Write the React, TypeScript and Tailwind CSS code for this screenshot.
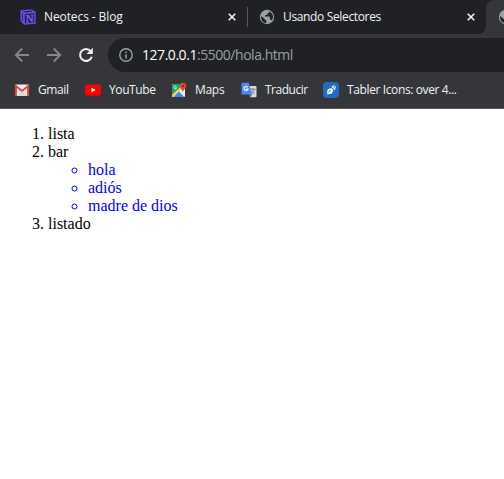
import React from 'react';

const ui = "font-['Open_Sans','Noto_Sans',sans-serif]";

function NotionIcon() {
  return (
    <svg width="16" height="16" viewBox="0 0 16 16" className="shrink-0">
      <path d="M.5 1.2 11.8.4 15.6 2.8v12L4.2 15.8.5 12z" fill="#6a4df5" />
      <path d="M2.6 2.4 11.5 1.8 13 2.7 4.2 3.4z" fill="#252238" />
      <path d="M1.9 3.6 3.1 4.8V12.6L1.9 11.3z" fill="#352b68" />
      <path d="M4.8 5 14.1 4.3v9.2l-9.3.8z" fill="#252238" />
      <path d="M6 6h2.7l2.8 4.6V6.7l-1-.2v-.7h3.1v.7l-.8.2v6.3h-1.4L7.9 8v4.4l1.1.3v.7H6v-.7l.7-.3V6.9L6 6.7z" fill="#7558ff" />
    </svg>
  );
}

function Globe() {
  return (
    <svg width="16" height="16" viewBox="0 0 16 16" className="shrink-0">
      <circle cx="8" cy="8" r="7.2" fill="#9aa0a6" />
      <path d="M2.1 7 5.7 10.1c.3.9.8 1.3 1.5 1.4v2.6C4 13.8 1.8 11.2 2.1 7zM9.3 2.2c2.6.6 4.6 2.8 4.8 5.5-.1 1.4-.6 2.8-1.5 3.8-.3-.7-.8-1-1.7-1V8.5c0-.6-.3-.9-.9-.9H6.2V6.1h1.5c.5 0 .8-.3.8-.8V3.9h1c.9 0 1.2-.6-.2-1.7z" fill="#202124" />
    </svg>
  );
}

function Close() {
  return (
    <svg width="8" height="8" viewBox="0 0 8 8" className="shrink-0">
      <path d="m.7.7 6.6 6.6M7.3.7.7 7.3" stroke="#f1f3f4" strokeWidth="1.6" />
    </svg>
  );
}

function Arrow({ flip = false }: { flip?: boolean }) {
  return (
    <svg width="16" height="16" viewBox="0 0 16 16" className={flip ? 'shrink-0 -scale-x-100' : 'shrink-0'}>
      <path d="M15 8H2M8.3 1.5 1.8 8l6.5 6.5" fill="none" stroke="#85878a" strokeWidth="1.8" />
    </svg>
  );
}

function Reload() {
  return (
    <svg width="16" height="16" viewBox="0 0 16 16" className="shrink-0">
      <path d="M12.7 4.1A6 6 0 1 0 13.8 9.8" fill="none" stroke="#f1f3f4" strokeWidth="2" />
      <path d="M14.8.8v6.3H8.5z" fill="#f1f3f4" />
    </svg>
  );
}

function Info() {
  return (
    <svg width="14" height="14" viewBox="0 0 14 14" className="shrink-0">
      <circle cx="7" cy="7" r="6.2" fill="none" stroke="#9aa0a6" strokeWidth="1.4" />
      <path d="M7 6.2v4.2M7 3.5v1.5" stroke="#9aa0a6" strokeWidth="1.5" />
    </svg>
  );
}

function Gmail() {
  return (
    <svg width="16" height="16" viewBox="0 0 16 16" className="shrink-0">
      <rect x="1" y="2.5" width="14" height="11.5" rx="1" fill="#eceded" />
      <path d="m3 14 5-4.8 5 4.8z" fill="#d5d5d5" />
      <path d="M1.9 14V4L8 9l6.1-5v10" fill="none" stroke="#dc493d" strokeWidth="2" />
    </svg>
  );
}

function YouTube() {
  return (
    <svg width="16" height="16" viewBox="0 0 16 16" className="shrink-0">
      <rect y="2.5" width="16" height="11.3" rx="2.8" fill="#f00" />
      <path d="m6.4 5.7 4.3 2.4-4.3 2.4z" fill="#fff" />
    </svg>
  );
}

function Maps() {
  return (
    <svg width="16" height="16" viewBox="0 0 16 16" className="shrink-0">
      <rect x="1" y="2" width="13" height="13" rx="1" fill="#edeff0" />
      <path d="M1 3a1 1 0 0 1 1-1h8.5v3.3L1 14z" fill="#21a464" />
      <path d="m1 12.8 9-8.2 1.2 1.2-9 9.2H2a1 1 0 0 1-1-1z" fill="#fbcf3b" />
      <path d="m2.7 15 5.2-5.4 5.3 5.4z" fill="#4285f4" />
      <path d="M5.4 4.4A1.4 1.4 0 1 0 5.6 6H4.2" fill="none" stroke="#fff" strokeWidth=".8" />
      <path d="M12 .8a3.2 3.2 0 0 0-3.2 3.3c0 2.5 2.7 3.5 3.1 6.3.5-2.8 3.3-3.8 3.3-6.3A3.2 3.2 0 0 0 12 .8z" fill="#ea4335" />
      <circle cx="12" cy="4" r="1.2" fill="#832d28" />
    </svg>
  );
}

function Translate() {
  return (
    <svg width="16" height="16" viewBox="0 0 16 16" className="shrink-0">
      <path d="M7 4h7.5a1 1 0 0 1 1 1v9.2a1 1 0 0 1-1 1H9z" fill="#dadcdf" />
      <path d="M9.2 7.2h5.3M11.8 6v1.2m1.5 0c-.4 2.2-1.5 3.4-2.8 4.5M10.6 8.6c.5 1.5 1.5 2.6 3 3.4" fill="none" stroke="#6b7178" strokeWidth=".9" />
      <path d="M1.5.8h6.3l3.5 11.8H1.5a1 1 0 0 1-1-1V1.8a1 1 0 0 1 1-1z" fill="#4a8af5" />
      <path d="M8.2 12.6h3.1l-2.1 2.7z" fill="#3464c8" />
      <path d="M6.7 5.4A2 2 0 1 0 7 7H5.2" fill="none" stroke="#fff" strokeWidth="1.1" />
    </svg>
  );
}

function Tabler() {
  return (
    <svg width="16" height="16" viewBox="0 0 16 16" className="shrink-0">
      <rect width="16" height="16" rx="4" fill="#206bc4" />
      <path d="M3.6 12.4 4.8 7.3 8.4 5.9l2 2-1.5 3.5z" fill="#fff" />
      <path d="m8.8 4.1 3.5 3.4" stroke="#fff" strokeWidth="1.3" />
      <path d="M4 12l2.8-2.8" stroke="#206bc4" strokeWidth=".7" />
      <circle cx="7.1" cy="9" r=".8" fill="#206bc4" />
      <path d="M10.1 3.6c1.4 0 2.4 1 2.4 2.3" fill="none" stroke="#fff" strokeWidth="1" />
    </svg>
  );
}

function Bookmark({ icon, label, className, textClass }: { icon: React.ReactNode; label: string; className: string; textClass: string }) {
  return (
    <div className={`flex shrink-0 items-center gap-2 ${className}`}>
      {icon}
      <span className={textClass}>{label}</span>
    </div>
  );
}

export default function App() {
  return (
    <div className="flex h-[479px] w-[504px] flex-col overflow-hidden bg-white">
      <header className={`shrink-0 border-b border-[#5b555a] bg-[#35363a] text-xs whitespace-nowrap text-[#f1f3f4] ${ui}`}>
        <div className="flex h-[34px] bg-[#35363a]">
          <div className="flex w-[486px] shrink-0 items-center rounded-br-lg bg-[#202124] pl-5">
            <div className="flex w-[227px] items-center">
              <NotionIcon />
              <span className="ml-2 w-[184px] tracking-[-0.1px]">Neotecs - Blog</span>
              <Close />
            </div>
            <div className="h-5 w-px bg-[#54565a]" />
            <div className="ml-[11px] flex items-center">
              <Globe />
              <span className="ml-2 w-[184px] tracking-[-0.35px]">Usando Selectores</span>
              <Close />
            </div>
          </div>
          <div className="flex flex-1 bg-[#202124]">
            <div className="flex flex-1 items-center overflow-hidden rounded-tl-lg bg-[#35363a] pl-3">
              <Globe />
            </div>
          </div>
        </div>
        <div className="flex h-[42px] items-center pl-[14px]">
          <Arrow />
          <div className="ml-4"><Arrow flip /></div>
          <div className="ml-4"><Reload /></div>
          <div className="ml-[14px] flex h-[34px] flex-1 items-center rounded-l-full bg-[#202124] pl-[11px] text-sm">
            <Info />
            <span className="ml-[9px] tracking-[-0.46px] text-white">127.0.0.1<span className="text-[#9aa0a6]">:5500/hola.html</span></span>
          </div>
        </div>
        <div className="flex h-8 items-start pt-[6px] pl-[14px]">
          <Bookmark icon={<Gmail />} label="Gmail" className="w-[71px]" textClass="tracking-[-0.4px]" />
          <Bookmark icon={<YouTube />} label="YouTube" className="w-[86px]" textClass="tracking-[-0.4px]" />
          <Bookmark icon={<Maps />} label="Maps" className="w-[70px]" textClass="tracking-[-0.3px]" />
          <Bookmark icon={<Translate />} label="Traducir" className="w-[82px]" textClass="tracking-[-0.5px]" />
          <Bookmark icon={<Tabler />} label="Tabler Icons: over 4..." className="w-[150px]" textClass="tracking-[-0.38px]" />
        </div>
      </header>
      <main className="px-2 py-4 font-['Liberation_Serif',serif] text-base leading-[18px] text-black">
        <ol className="list-decimal pl-10">
          <li>lista</li>
          <li>
            bar
            <ul className="list-[circle] pl-10 text-[#0000ff]">
              <li>hola</li>
              <li>adiós</li>
              <li>madre de dios</li>
            </ul>
          </li>
          <li>listado</li>
        </ol>
      </main>
    </div>
  );
}
